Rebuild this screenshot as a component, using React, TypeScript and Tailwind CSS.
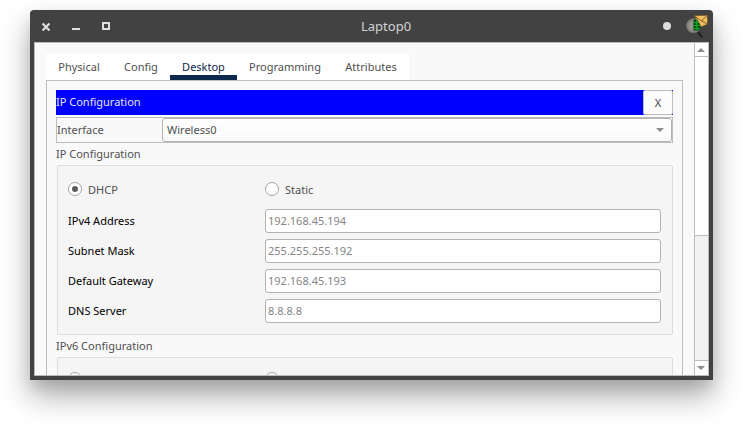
import type { ReactNode } from "react";

const fields = [
  { label: "IPv4 Address", value: "192.168.45.194" },
  { label: "Subnet Mask", value: "255.255.255.192" },
  { label: "Default Gateway", value: "192.168.45.193" },
  { label: "DNS Server", value: "8.8.8.8" },
];

const tabs = [
  { name: "Physical", width: "w-[66px]" },
  { name: "Config", width: "w-[58px]" },
  { name: "Desktop", width: "w-[67px]" },
  { name: "Programming", width: "w-[96px]" },
  { name: "Attributes", width: "w-[76px]" },
];

function TitleBar() {
  return (
    <header className="flex h-8 shrink-0 items-center text-[#dedede]">
      <svg className="ml-2 mt-px h-2 w-2 shrink-0" viewBox="0 0 8 8" fill="none" stroke="currentColor" strokeWidth="2.2">
        <path d="M.5.5l7 7M7.5.5l-7 7" />
      </svg>
      <svg className="ml-[22px] h-2 w-2 shrink-0" viewBox="0 0 8 8" fill="currentColor" shapeRendering="crispEdges">
        <path d="M0 6h8v2H0z" />
      </svg>
      <svg className="ml-[22px] h-2 w-2 shrink-0" viewBox="0 0 8 8" fill="none" stroke="currentColor" strokeWidth="2" shapeRendering="crispEdges">
        <path d="M1 1h6v6H1z" />
      </svg>
      <h1 className="ml-[251px] w-[50px] shrink-0 whitespace-nowrap text-[13px] leading-8 text-[#d3d3d3]">Laptop0</h1>
      <span className="ml-[252px] h-2 w-2 shrink-0 rounded-full bg-[#dedede]" />
      <svg className="ml-[14px] h-6 w-6 shrink-0" viewBox="0 0 24 24">
        <circle cx="8.5" cy="11.7" r="7" fill="#85837f" stroke="#73716c" />
        <path d="M3.5 12a5.5 5.5 0 0 1 5-5v10a5.5 5.5 0 0 1-5-5z" fill="#98958f" />
        <path d="m13 18 4.5 5.5" stroke="#242424" strokeWidth="2.2" />
        <path d="M8.5 5.5H16V14l-3 2.5H8.5z" fill="#064b12" />
        <path d="M9 8.5h2M12.5 8.5h2M9 11.5h2M12.5 11.5h3M9 14.5h2M12.5 14.5h2M11.8 6v10" stroke="#07b827" strokeWidth="1.2" />
        <path d="M9.3 1.7 22.3 1.3l.3 8.7-6.6 3-1.8-4z" fill="#f0c060" stroke="#70501b" strokeWidth=".7" />
        <path d="m9.5 2 7 5L22 1.5M16.5 7l5.8 2.8" fill="none" stroke="#65471a" strokeWidth=".8" />
      </svg>
    </header>
  );
}

function Tabs() {
  return (
    <nav className="flex h-[26px] w-[363px] bg-white">
      {tabs.map(({ name, width }) => (
        <div
          key={name}
          className={`${width} shrink-0 border-b-[5px] text-center leading-[26px] ${
            name === "Desktop" ? "border-[#0d274d] text-[#0d274d]" : "border-transparent"
          }`}
        >
          {name}
        </div>
      ))}
    </nav>
  );
}

function Radio({ children, checked = false }: { children?: ReactNode; checked?: boolean }) {
  return (
    <div className="flex h-[14px] w-[197px] items-center">
      <span className="flex h-[14px] w-[14px] shrink-0 items-center justify-center rounded-full border border-[#a3a3a3] bg-white">
        {checked && <span className="h-[6px] w-[6px] rounded-full bg-[#5c5c5c]" />}
      </span>
      {children && <span className="ml-[6px] mt-[2px]">{children}</span>}
    </div>
  );
}

function Scrollbar() {
  return (
    <div className="flex w-[14px] shrink-0 flex-col border-l border-[#bdbdbd] bg-[#f1f1f1]">
      <div className="flex h-[14px] shrink-0 items-center justify-center border-b border-[#bdbdbd] bg-white">
        <svg className="mr-px h-1 w-2" viewBox="0 0 8 4" fill="#8c8c8c"><path d="M0 4 4 0l4 4z" /></svg>
      </div>
      <div className="h-[179px] shrink-0 border-b border-[#bdbdbd] bg-white" />
      <div className="grow" />
      <div className="flex h-[15px] shrink-0 items-center justify-center border-t border-[#bdbdbd] bg-white">
        <svg className="mr-px mb-px h-1 w-2" viewBox="0 0 8 4" fill="#8c8c8c"><path d="m0 0 4 4 4-4z" /></svg>
      </div>
    </div>
  );
}

export default function App() {
  return (
    <main className="h-[442px] w-[743px] overflow-hidden bg-white pl-[30px] pt-[10px] font-['Noto_Sans',sans-serif] text-[11px] text-[#505050]">
      <div className="flex h-[370px] w-[683px] flex-col rounded-t-[4px] bg-[#424242] px-1 pb-1 shadow-[0_16px_30px_rgba(0,0,0,0.33),0_7px_14px_rgba(0,0,0,0.09)]">
        <TitleBar />
        <div className="flex min-h-0 grow overflow-hidden border border-[#bababa] bg-[#f9f9f9]">
          <div className="min-w-0 grow pl-[11px] pt-[11px]">
            <Tabs />
            <section className="h-[320px] w-[637px] border border-[#bdbdbd] pl-[9px] pt-[9px]">
              <div className="flex h-[25px] w-[617px] justify-between bg-[#0000ff] text-[#e4e4e4]">
                <span className="leading-[24px]">IP Configuration</span>
                <button className="h-[25px] w-[30px] rounded-[2px] border border-[#bdbdbd] bg-[#fcfcfc] pt-[2px] text-[11px] text-[#424242]">X</button>
              </div>
              <div className="mt-[2px] flex h-[26px] w-[617px] border border-[#bdbdbd]">
                <span className="w-[105px] shrink-0 leading-[24px]">Interface</span>
                <div className="flex h-[24px] grow items-center justify-between rounded-[3px] border border-[#b2b2b2] bg-linear-to-b from-white to-[#f9f9f9] pl-1 pr-[7px]">
                  <span>Wireless0</span>
                  <svg className="h-1 w-2" viewBox="0 0 8 4" fill="#8c8c8c"><path d="m0 0 4 4 4-4z" /></svg>
                </div>
              </div>
              <h2 className="h-[22px] leading-[22px]">IP Configuration</h2>
              <div className="ml-px h-[170px] w-[616px] rounded-[2px] border border-[#dcdcdc] bg-[#f5f5f5] pl-[10px] pt-4">
                <div className="flex">
                  <Radio checked>DHCP</Radio>
                  <Radio>Static</Radio>
                </div>
                <div className="mt-[13px] flex flex-col gap-[6px]">
                  {fields.map(({ label, value }) => (
                    <label key={label} className="flex h-[24px] w-[593px] items-center text-black">
                      <span className="w-[197px] shrink-0">{label}</span>
                      <input readOnly value={value} className="h-[24px] min-w-0 grow rounded-[3px] border border-[#b2b2b2] bg-white px-[2px] pb-[2px] text-[#858585] outline-none" />
                    </label>
                  ))}
                </div>
              </div>
              <h2 className="h-[22px] leading-[22px]">IPv6 Configuration</h2>
              <div className="ml-px flex h-[60px] w-[616px] rounded-[2px] border border-[#dcdcdc] bg-[#f5f5f5] pl-[10px] pt-[14px]">
                <Radio />
                <Radio />
              </div>
            </section>
          </div>
          <Scrollbar />
        </div>
      </div>
    </main>
  );
}
